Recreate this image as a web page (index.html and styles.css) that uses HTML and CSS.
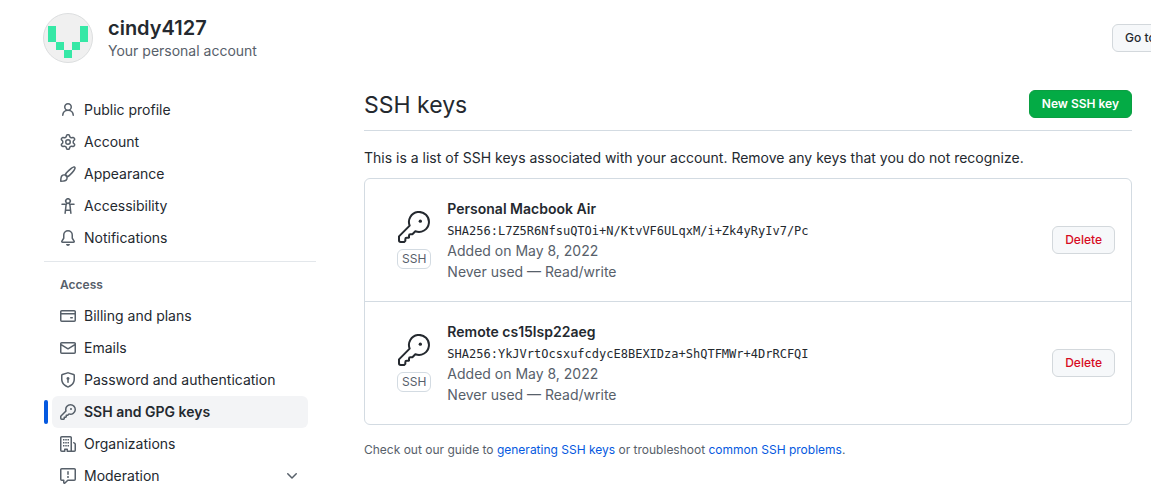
FILE: index.html
```html
<!DOCTYPE html>
<html lang="en">
<head>
<meta charset="utf-8">
<title>SSH and GPG keys</title>
<link rel="stylesheet" href="styles.css">
</head>
<body>
<svg class="sprite" aria-hidden="true">
  <symbol id="key" viewBox="0 0 16 16"><path d="M10.5 0a5.499 5.499 0 1 1-1.288 10.848l-.932.932a.749.749 0 0 1-.53.22H7v.75a.749.749 0 0 1-.22.53l-.5.5a.749.749 0 0 1-.53.22H5v.75a.749.749 0 0 1-.22.53l-.5.5a.749.749 0 0 1-.53.22h-2A1.75 1.75 0 0 1 0 14.25v-2c0-.199.079-.389.22-.53l4.932-4.932A5.5 5.5 0 0 1 10.5 0Zm-4 5.5c-.001.431.069.86.205 1.269a.75.75 0 0 1-.181.768L1.5 12.56v1.69c0 .138.112.25.25.25h1.69l.06-.06v-1.19a.75.75 0 0 1 .75-.75h1.19l.06-.06v-1.19a.75.75 0 0 1 .75-.75h1.19l1.023-1.025a.75.75 0 0 1 .768-.18A4 4 0 1 0 6.5 5.5ZM11 6a1 1 0 1 1 0-2 1 1 0 0 1 0 2Z"/></symbol>
  <symbol id="key-large" viewBox="0 0 24 24"><path d="M8.75 11A7.5 7.5 0 1 1 13 15.200L11 17.200Q10.700 17.500 10.300 17.500H9.250Q8.250 17.500 8.250 18.500V19.800L8 20H6.500Q5.500 20 5.500 21V22.300L4.600 23.200H2Q.75 23.200 .75 22V19Z" fill="none" stroke="currentColor" stroke-width="1.5" stroke-linejoin="round"/><circle cx="16.750" cy="7.600" r="1.250"/></symbol>
</svg>
<div class="page">
  <header class="profile">
    <svg class="avatar" viewBox="0 0 50 50" role="img" aria-label="cindy4127">
      <circle cx="25" cy="25" r="24.500" fill="#f0f0f0" stroke="#dcdedf"/>
      <path d="M5 13h8v16H5zM37 13h8v16h-8zM13 29h8v8h-8zM29 29h8v8h-8zM21 37h8v8h-8z" fill="#36e8a6"/>
    </svg>
    <div class="identity">
      <h1>cindy4127</h1>
      <p>Your personal account</p>
    </div>
    <div class="profile-action"><button type="button" class="button">Go to your personal profile</button></div>
  </header>
  <div class="layout">
    <nav class="sidebar" aria-label="Settings">
      <ul>
        <li><a href="#"><svg class="icon" viewBox="0 0 16 16"><path d="M10.561 8.073a6.005 6.005 0 0 1 3.432 5.142.75.75 0 1 1-1.498.07 4.500 4.500 0 0 0-8.990 0 .75.75 0 0 1-1.498-.07 6.004 6.004 0 0 1 3.431-5.142 3.999 3.999 0 1 1 5.123 0ZM10.500 5a2.500 2.500 0 1 0-5 0 2.500 2.500 0 0 0 5 0Z"/></svg>Public profile</a></li>
        <li><a href="#"><svg class="icon" viewBox="0 0 16 16"><path d="M8 0a8.200 8.200 0 0 1 .701.031C9.444.095 9.990.645 10.160 1.290l.288 1.107c.018.066.079.158.212.224.231.114.454.243.668.386.123.082.233.090.299.071l1.103-.303c.644-.176 1.392.021 1.820.630.270.385.506.792.704 1.218.315.675.111 1.422-.364 1.891l-.814.806c-.049.048-.098.147-.088.294.016.257.016.515 0 .772-.010.147.038.246.088.294l.814.806c.475.469.679 1.216.364 1.891a7.977 7.977 0 0 1-.704 1.217c-.428.610-1.176.807-1.820.630l-1.102-.302c-.067-.019-.177-.011-.300.071a5.909 5.909 0 0 1-.668.386c-.133.066-.194.158-.211.224l-.290 1.106c-.168.646-.715 1.196-1.458 1.260a8.006 8.006 0 0 1-1.402 0c-.743-.064-1.289-.614-1.458-1.260l-.289-1.106c-.018-.066-.079-.158-.212-.224a5.738 5.738 0 0 1-.668-.386c-.123-.082-.233-.090-.299-.071l-1.103.303c-.644.176-1.392-.021-1.820-.630a8.120 8.120 0 0 1-.704-1.218c-.315-.675-.111-1.422.363-1.891l.815-.806c.050-.048.098-.147.088-.294a6.214 6.214 0 0 1 0-.772c.010-.147-.038-.246-.088-.294l-.815-.806C.635 6.045.431 5.298.746 4.623a7.920 7.920 0 0 1 .704-1.217c.428-.610 1.176-.807 1.820-.630l1.102.302c.067.019.177.011.300-.071.214-.143.437-.272.668-.386.133-.066.194-.158.211-.224l.290-1.106C6.009.645 6.556.095 7.299.030 7.530.010 7.764 0 8 0Zm-.571 1.525c-.036.003-.108.036-.137.146l-.289 1.105c-.147.561-.549.967-.998 1.189-.173.086-.340.183-.500.290-.417.278-.970.423-1.529.270l-1.103-.303c-.109-.030-.175.016-.195.045-.220.312-.412.644-.573.990-.014.031-.021.110.059.190l.815.806c.411.406.562.957.530 1.456a4.709 4.709 0 0 0 0 .582c.032.499-.119 1.050-.530 1.456l-.815.806c-.081.080-.073.159-.059.190.162.346.353.677.573.989.020.030.085.076.195.046l1.102-.303c.560-.153 1.113-.008 1.530.270.161.107.328.204.501.290.447.222.850.629.997 1.189l.289 1.105c.029.109.101.143.137.146a6.600 6.600 0 0 0 1.142 0c.036-.003.108-.036.137-.146l.289-1.105c.147-.561.549-.967.998-1.189.173-.086.340-.183.500-.290.417-.278.970-.423 1.529-.270l1.103.303c.109.029.175-.016.195-.045.220-.313.411-.644.573-.990.014-.031.021-.110-.059-.190l-.815-.806c-.411-.406-.562-.957-.530-1.456a4.709 4.709 0 0 0 0-.582c-.032-.499.119-1.050.530-1.456l.815-.806c.081-.080.073-.159.059-.190a6.464 6.464 0 0 0-.573-.989c-.020-.030-.085-.076-.195-.046l-1.102.303c-.560.153-1.113.008-1.530-.270a4.440 4.440 0 0 0-.501-.290c-.447-.222-.850-.629-.997-1.189l-.289-1.105c-.029-.110-.101-.143-.137-.146a6.600 6.600 0 0 0-1.142 0ZM11 8a3 3 0 1 1-6 0 3 3 0 0 1 6 0ZM9.500 8a1.500 1.500 0 1 0-3.001.001A1.500 1.500 0 0 0 9.500 8Z"/></svg>Account</a></li>
        <li><a href="#"><svg class="icon" viewBox="0 0 16 16"><path d="M11.134 1.535c.700-.509 1.416-.942 2.076-1.155.649-.210 1.463-.267 2.069.340.603.601.568 1.411.368 2.070-.202.668-.624 1.390-1.125 2.096-1.011 1.424-2.496 2.987-3.775 4.249-1.098 1.084-2.132 1.839-3.040 2.300a3.744 3.744 0 0 1-1.055 3.217c-.431.431-1.065.691-1.657.861-.614.177-1.294.287-1.914.357A21.151 21.151 0 0 1 .797 16H.743l.007-.750H.749L.742 16a.75.75 0 0 1-.743-.742l.743-.008-.742.007v-.054a21.250 21.250 0 0 1 .130-2.284c.067-.647.187-1.287.358-1.914.170-.591.430-1.226.860-1.657a3.746 3.746 0 0 1 3.227-1.054c.466-.893 1.225-1.907 2.314-2.982 1.271-1.255 2.833-2.750 4.245-3.777ZM1.620 13.089c-.051.464-.086.929-.104 1.395.466-.018.932-.053 1.396-.104a10.511 10.511 0 0 0 1.668-.309c.526-.151.856-.325 1.011-.480a2.250 2.250 0 1 0-3.182-3.182c-.155.155-.329.485-.480 1.011a10.515 10.515 0 0 0-.309 1.669Zm10.396-10.340c-1.240.900-2.685 2.280-3.980 3.560a10.600 10.600 0 0 0-1.750 2.130 3.740 3.740 0 0 1 1.290 1.290c.700-.400 1.400-.980 2.160-1.740 1.300-1.290 2.700-2.780 3.580-4.020.450-.640.760-1.200.890-1.620.120-.380.060-.520.030-.550-.030-.030-.160-.090-.540.030-.420.130-1.020.450-1.680.920Z"/></svg>Appearance</a></li>
        <li><a href="#"><svg class="icon" viewBox="0 0 16 16"><path d="M9.923 5.302c.063.063.122.129.178.198H14A.75.75 0 0 1 14 7h-3.300l.578 5.163.362 2.997a.75.75 0 0 1-1.490.180L9.868 13H6.132l-.282 2.340a.75.75 0 0 1-1.490-.180l.362-2.997L5.300 7H2a.75.75 0 0 1 0-1.500h3.900a2.540 2.540 0 0 1 .176-.198 3 3 0 1 1 3.847 0ZM9.200 7.073h-.001a1.206 1.206 0 0 0-2.398 0L6.305 11.500h3.390ZM9.500 3a1.500 1.500 0 1 0-3.001.001A1.500 1.500 0 0 0 9.500 3Z"/></svg>Accessibility</a></li>
        <li><a href="#"><svg class="icon" viewBox="0 0 16 16"><path d="M8 16a2 2 0 0 0 1.985-1.750c.017-.137-.097-.250-.235-.250h-3.500c-.138 0-.252.113-.235.250A2 2 0 0 0 8 16ZM3 5a5 5 0 0 1 10 0v2.947c0 .050.015.098.042.139l1.703 2.555A1.519 1.519 0 0 1 13.482 13H2.518a1.516 1.516 0 0 1-1.263-2.360l1.703-2.554A.255.255 0 0 0 3 7.947Zm5-3.500A3.500 3.500 0 0 0 4.500 5v2.947c0 .346-.102.683-.294.970l-1.703 2.556a.017.017 0 0 0 .015.027h10.964a.017.017 0 0 0 .015-.027l-1.703-2.556a1.745 1.745 0 0 1-.294-.970V5A3.500 3.500 0 0 0 8 1.500Z"/></svg>Notifications</a></li>
      </ul>
      <h2>Access</h2>
      <ul>
        <li><a href="#"><svg class="icon" viewBox="0 0 16 16"><path d="M10.750 9a.75.75 0 0 0 0 1.500h1.500a.75.75 0 0 0 0-1.500h-1.500Z"/><path d="M0 3.750C0 2.784.784 2 1.750 2h12.500c.966 0 1.750.784 1.750 1.750v8.500A1.750 1.750 0 0 1 14.250 14H1.750A1.750 1.750 0 0 1 0 12.250ZM14.500 6.500h-13v5.750c0 .138.112.250.250.250h12.500a.250.250 0 0 0 .250-.250Zm0-2.750a.250.250 0 0 0-.250-.250H1.750a.250.250 0 0 0-.250.250V5h13Z"/></svg>Billing and plans</a></li>
        <li><a href="#"><svg class="icon" viewBox="0 0 16 16"><path d="M1.750 2h12.500c.966 0 1.750.784 1.750 1.750v8.500A1.750 1.750 0 0 1 14.250 14H1.750A1.750 1.750 0 0 1 0 12.250v-8.500C0 2.784.784 2 1.750 2ZM1.500 12.251c0 .138.112.250.250.250h12.500a.250.250 0 0 0 .250-.250V5.809L8.380 9.397a.75.75 0 0 1-.760 0L1.500 5.809v6.442Zm13-8.181v-.320a.250.250 0 0 0-.250-.250H1.750a.250.250 0 0 0-.250.250v.320L8 7.880Z"/></svg>Emails</a></li>
        <li><a href="#"><svg class="icon" viewBox="0 0 16 16"><path d="m8.533.133 5.250 1.680A1.750 1.750 0 0 1 15 3.480V7c0 1.566-.320 3.182-1.303 4.682-.983 1.498-2.585 2.813-5.032 3.855a1.697 1.697 0 0 1-1.330 0c-2.447-1.042-4.049-2.357-5.032-3.855C1.320 10.182 1 8.566 1 7V3.480a1.750 1.750 0 0 1 1.217-1.667l5.250-1.680a1.748 1.748 0 0 1 1.066 0Zm-.610 1.429-5.250 1.680A.250.250 0 0 0 2.500 3.480V7c0 1.358.275 2.666 1.057 3.860.784 1.194 2.121 2.340 4.366 3.297a.196.196 0 0 0 .154 0c2.245-.957 3.582-2.103 4.366-3.297C13.225 9.666 13.500 8.358 13.500 7V3.480a.251.251 0 0 0-.174-.238l-5.250-1.680a.250.250 0 0 0-.153 0ZM9.500 6.500c0 .536-.286 1.032-.750 1.300v2.450a.75.75 0 0 1-1.500 0V7.800A1.500 1.500 0 1 1 9.500 6.500Z"/></svg>Password and authentication</a></li>
        <li class="current"><a href="#" aria-current="page"><svg class="icon"><use href="#key"/></svg>SSH and GPG keys</a></li>
        <li><a href="#"><svg class="icon" viewBox="0 0 16 16"><path d="M1.750 16A1.750 1.750 0 0 1 0 14.250V1.750C0 .784.784 0 1.750 0h8.500C11.216 0 12 .784 12 1.750v12.500c0 .085-.006.168-.018.250h2.268a.250.250 0 0 0 .250-.250V8.285a.250.250 0 0 0-.111-.208l-1.055-.703a.749.749 0 1 1 .832-1.248l1.055.703c.487.325.779.871.779 1.456v5.965A1.750 1.750 0 0 1 14.250 16h-3.500a.766.766 0 0 1-.197-.026c-.099.017-.200.026-.303.026h-3a.75.75 0 0 1-.750-.750V14h-1v1.250a.75.75 0 0 1-.750.750Zm-.250-1.750c0 .138.112.250.250.250H4v-1.250a.75.75 0 0 1 .750-.750h2.500a.75.75 0 0 1 .750.750v1.250h2.250a.250.250 0 0 0 .250-.250V1.750a.250.250 0 0 0-.250-.250h-8.500a.250.250 0 0 0-.250.250ZM3 3h1.500v1.500H3zM5.250 3h1.500v1.500h-1.500zM7.500 3H9v1.500H7.500zM3 6h1.500v1.500H3zM5.250 6h1.500v1.500h-1.500zM7.500 6H9v1.500H7.500zM3 9h1.500v1.500H3zM5.250 9h1.500v1.500h-1.500zM7.500 9H9v1.500H7.500z"/></svg>Organizations</a></li>
        <li><a href="#"><svg class="icon" viewBox="0 0 16 16"><path d="M0 1.750C0 .784.784 0 1.750 0h12.500C15.216 0 16 .784 16 1.750v9.500A1.750 1.750 0 0 1 14.250 13H8.060l-2.573 2.573A1.458 1.458 0 0 1 3 14.543V13H1.750A1.750 1.750 0 0 1 0 11.250Zm1.750-.250a.250.250 0 0 0-.250.250v9.500c0 .138.112.250.250.250h2a.75.75 0 0 1 .750.750v2.190l2.720-2.720a.749.749 0 0 1 .530-.220h6.500a.250.250 0 0 0 .250-.250v-9.500a.250.250 0 0 0-.250-.250Zm7 2.250v2.500a.75.75 0 0 1-1.500 0v-2.500a.75.75 0 0 1 1.500 0ZM9 9a1 1 0 1 1-2 0 1 1 0 0 1 2 0Z"/></svg>Moderation<svg class="icon chevron" viewBox="0 0 16 16"><path d="M12.780 5.220a.749.749 0 0 1 0 1.060l-4.250 4.250a.749.749 0 0 1-1.060 0L3.220 6.280a.749.749 0 1 1 1.060-1.060L8 8.939l3.720-3.719a.749.749 0 0 1 1.060 0Z"/></svg></a></li>
      </ul>
    </nav>
    <main class="content">
      <div class="heading">
        <h2>SSH keys</h2>
        <button type="button" class="button primary">New SSH key</button>
      </div>
      <p class="intro">This is a list of SSH keys associated with your account. Remove any keys that you do not recognize.</p>
      <ul class="keys">
        <li>
          <div class="kind"><svg class="key-icon"><use href="#key-large"/></svg><span class="badge">SSH</span></div>
          <div class="details">
            <strong>Personal Macbook Air</strong>
            <div class="fingerprint"><code>SHA256:L7Z5R6NfsuQTOi+N/KtvVF6ULqxM/i+Zk4yRyIv7/Pc</code></div>
            <span>Added on May 8, 2022</span>
            <span>Never used — Read/write</span>
          </div>
          <button type="button" class="button danger">Delete</button>
        </li>
        <li>
          <div class="kind"><svg class="key-icon"><use href="#key-large"/></svg><span class="badge">SSH</span></div>
          <div class="details">
            <strong>Remote cs15lsp22aeg</strong>
            <div class="fingerprint"><code>SHA256:YkJVrtOcsxufcdycE8BEXIDza+ShQTFMWr+4DrRCFQI</code></div>
            <span>Added on May 8, 2022</span>
            <span>Never used — Read/write</span>
          </div>
          <button type="button" class="button danger">Delete</button>
        </li>
      </ul>
      <p class="guide">Check out our guide to <a href="#">generating SSH keys</a> or troubleshoot <a href="#">common SSH problems</a>.</p>
    </main>
  </div>
</div>
</body>
</html>
```
FILE: styles.css
```css
* { box-sizing: border-box; }
body {
  margin: 0;
  overflow: hidden;
  background: #fff;
  color: #24292f;
  font: 14px/21px Inter, "Liberation Sans", sans-serif;
}
h1, h2, p, ul { margin: 0; padding: 0; }
ul { list-style: none; }
a { color: #0559e0; text-decoration: none; }
.sprite { display: none; }
.page { padding: 13px 19px 0 44px; }
.profile { display: flex; align-items: center; margin-left: -1px; }
.avatar { width: 50px; height: 50px; flex: none; }
.identity { flex: 1; margin-left: 15px; }
.identity h1 { font-size: 20px; line-height: 26px; font-weight: 600; }
.identity p { color: #57606a; line-height: 20px; }
.profile-action { flex: 0 0 20px; min-width: 0; }
.button {
  height: 28px;
  padding: 0 12px;
  border: 1px solid #d3d8dc;
  border-radius: 6px;
  background: #f6f8fa;
  color: #24292f;
  font: 500 12px/20px Inter, "Liberation Sans", sans-serif;
  white-space: nowrap;
}
.primary { background: #04ab45; border-color: #0a9f42; color: #fff; font-weight: 600; }
.danger { color: #d60a22; }
.layout { display: flex; gap: 48px; margin-top: 27px; }
.sidebar { flex: 0 0 272px; padding-top: 4px; }
.sidebar li { display: flex; position: relative; padding: 0 8px; }
.sidebar a {
  display: flex;
  flex: 1;
  align-items: center;
  gap: 8px;
  height: 32px;
  padding: 0 8px;
  border-radius: 6px;
  color: #24292f;
  line-height: 20px;
}
.sidebar h2 {
  margin-top: 7px;
  padding: 13px 16px 5px;
  border-top: 1px solid #e3e7eb;
  color: #57606a;
  font-size: 12px;
  line-height: 20px;
  font-weight: 600;
}
.sidebar .current a { background: #f3f4f6; font-weight: 600; }
.current::before {
  content: "";
  position: absolute;
  left: 0;
  top: 4px;
  width: 4px;
  height: 24px;
  border-radius: 6px;
  background: #0559e0;
}
.icon { width: 16px; height: 16px; flex: none; fill: #57606a; }
.chevron { margin-left: auto; }
.content { flex: 1; min-width: 0; }
.heading {
  display: flex;
  align-items: flex-start;
  justify-content: space-between;
  padding-bottom: 10px;
  border-bottom: 1px solid #d3dbe2;
}
.heading h2 { font-size: 23px; line-height: 30px; font-weight: 400; }
.intro { margin: 16px 0 10px; }
.keys { border: 1px solid #d3dbe2; border-radius: 6px; }
.keys li { display: flex; align-items: center; padding: 19px 16px; }
.keys li + li { border-top: 1px solid #d3dbe2; }
.kind { display: flex; flex-direction: column; align-items: center; gap: 6px; margin: 0 16px; }
.key-icon { width: 32px; height: 32px; fill: #24292f; color: #24292f; }
.badge {
  padding: 0 4px;
  border: 1px solid #d3dbe2;
  border-radius: 6px;
  color: #57606a;
  font-size: 12px;
  line-height: 18px;
}
.details { display: flex; flex: 1; flex-direction: column; min-width: 0; color: #57606a; }
.details strong { color: #24292f; font-weight: 600; }
.fingerprint { height: 21px; }
.fingerprint code { color: #24292f; font-family: "DejaVu Sans Mono", monospace; font-size: 12px; }
.guide { margin-top: 15px; color: #57606a; font-size: 12px; line-height: 20px; }
```
